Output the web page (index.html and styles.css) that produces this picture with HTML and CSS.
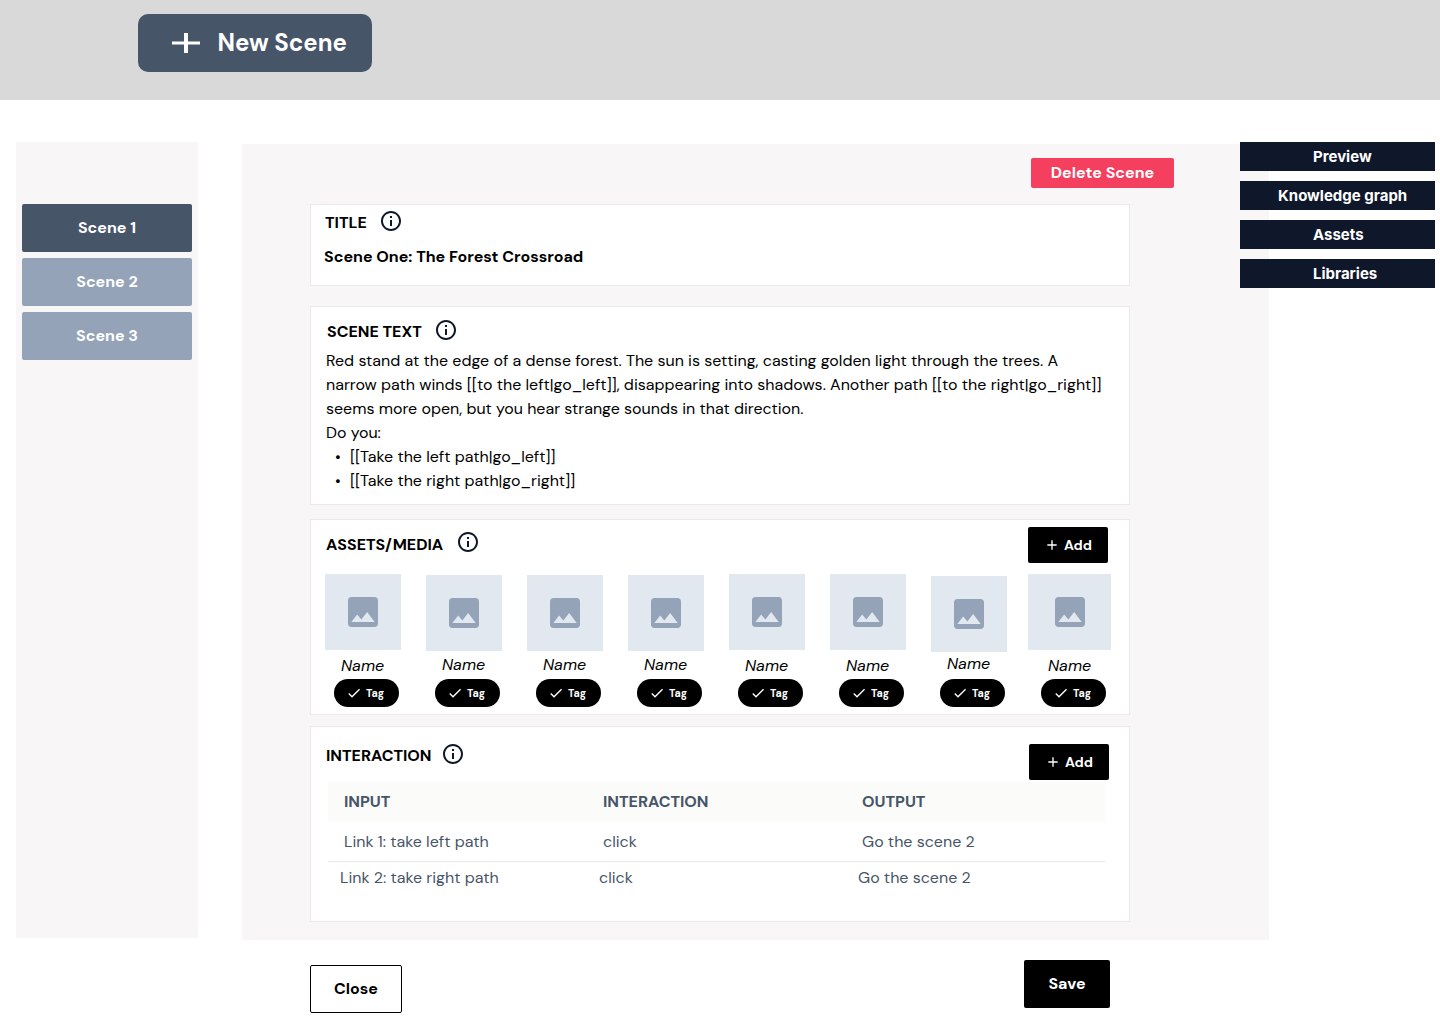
FILE: index.html
```html
<!DOCTYPE html>
<html lang="en">
<head>
<meta charset="utf-8">
<title>Scene editor</title>
<link rel="stylesheet" href="styles.css">
</head>
<body>
<svg class="defs" aria-hidden="true">
  <symbol id="info" viewBox="2 2 20 20"><path d="M11 7h2v2h-2zm0 4h2v6h-2zm1-9C6.48 2 2 6.48 2 12s4.48 10 10 10 10-4.48 10-10S17.52 2 12 2zm0 18c-4.41 0-8-3.59-8-8s3.59-8 8-8 8 3.590 8 8-3.59 8-8 8z"/></symbol>
  <symbol id="image" viewBox="3 3 18 18"><path d="M21 19V5c0-1.100-.9-2-2-2H5c-1.100 0-2 .9-2 2v14c0 1.100.9 2 2 2h14c1.100 0 2-.9 2-2zM8.500 13.500l2.500 3.010L14.500 12l4.500 6H5l3.500-4.500z"/></symbol>
  <symbol id="plus" viewBox="0 0 24 24"><path d="M19 13h-6v6h-2v-6H5v-2h6V5h2v6h6v2z"/></symbol>
  <symbol id="check" viewBox="0 0 24 24"><path d="M9 16.170L4.830 12l-1.420 1.410L9 19 21 7l-1.410-1.410z"/></symbol>
</svg>

<header class="topbar">
  <button class="new-scene">
    <svg class="new-plus" viewBox="5 5 14 14" preserveAspectRatio="none"><path d="M19 13h-6v6h-2v-6H5v-2h6V5h2v6h6v2z"/></svg>
    <span>New Scene</span>
  </button>
</header>

<div class="workspace">
  <aside class="scenes">
    <button class="scene active">Scene 1</button>
    <button class="scene">Scene 2</button>
    <button class="scene">Scene 3</button>
  </aside>

  <main class="editor">
    <button class="delete">Delete Scene</button>

    <section class="card card-title">
      <div class="heading"><h2>TITLE</h2><svg class="info"><use href="#info"/></svg></div>
      <p class="scene-name">Scene One: The Forest Crossroad</p>
    </section>

    <section class="card card-text">
      <div class="heading"><h2>SCENE TEXT</h2><svg class="info"><use href="#info"/></svg></div>
      <div class="prose">
        <p>Red stand at the edge of a dense forest. The sun is setting, casting golden light through the trees. A<br>
        narrow path winds [[to the left|go_left]], disappearing into shadows. Another path [[to the right|go_right]]<br>
        seems more open, but you hear strange sounds in that direction.</p>
        <p>Do you:</p>
        <ul>
          <li>[[Take the left path|go_left]]</li>
          <li>[[Take the right path|go_right]]</li>
        </ul>
      </div>
    </section>

    <section class="card card-assets">
      <div class="bar">
        <div class="heading"><h2>ASSETS/MEDIA</h2><svg class="info"><use href="#info"/></svg></div>
        <button class="add"><svg><use href="#plus"/></svg>Add</button>
      </div>
      <div class="assets">
        <div class="asset"><div class="thumb"><svg><use href="#image"/></svg></div><em>Name</em><span class="tag"><svg><use href="#check"/></svg>Tag</span></div>
        <div class="asset low"><div class="thumb"><svg><use href="#image"/></svg></div><em>Name</em><span class="tag"><svg><use href="#check"/></svg>Tag</span></div>
        <div class="asset low"><div class="thumb"><svg><use href="#image"/></svg></div><em>Name</em><span class="tag"><svg><use href="#check"/></svg>Tag</span></div>
        <div class="asset low"><div class="thumb"><svg><use href="#image"/></svg></div><em>Name</em><span class="tag"><svg><use href="#check"/></svg>Tag</span></div>
        <div class="asset"><div class="thumb"><svg><use href="#image"/></svg></div><em>Name</em><span class="tag"><svg><use href="#check"/></svg>Tag</span></div>
        <div class="asset"><div class="thumb"><svg><use href="#image"/></svg></div><em>Name</em><span class="tag"><svg><use href="#check"/></svg>Tag</span></div>
        <div class="asset lower"><div class="thumb"><svg><use href="#image"/></svg></div><em>Name</em><span class="tag"><svg><use href="#check"/></svg>Tag</span></div>
        <div class="asset wide"><div class="thumb"><svg><use href="#image"/></svg></div><em>Name</em><span class="tag"><svg><use href="#check"/></svg>Tag</span></div>
      </div>
    </section>

    <section class="card card-interaction">
      <div class="bar">
        <div class="heading"><h2>INTERACTION</h2><svg class="info"><use href="#info"/></svg></div>
        <button class="add"><svg><use href="#plus"/></svg>Add</button>
      </div>
      <div class="table">
        <div class="row head"><span>INPUT</span><span>INTERACTION</span><span>OUTPUT</span></div>
        <div class="row first"><span>Link 1: take left path</span><span>click</span><span>Go the scene 2</span></div>
        <div class="row second"><span>Link 2: take right path</span><span>click</span><span>Go the scene 2</span></div>
      </div>
    </section>
  </main>

  <nav class="tools">
    <a>Preview</a>
    <a class="long">Knowledge graph</a>
    <a>Assets</a>
    <a>Libraries</a>
  </nav>
</div>

<footer class="actions">
  <button class="close">Close</button>
  <button class="save">Save</button>
</footer>
</body>
</html>
```
FILE: styles.css
```css
* { box-sizing: border-box; margin: 0; padding: 0; }
body {
  width: 1440px;
  height: 1024px;
  overflow: hidden;
  background: #fff;
  color: #000;
  font: 400 16px/24px "DM Sans", Inter, sans-serif;
}
button { border: 0; border-radius: 2px; font: inherit; font-weight: 700; color: #fff; }
svg { display: block; flex: none; fill: currentColor; }
.defs { position: absolute; width: 0; height: 0; }

.topbar { height: 100px; padding: 14px 138px; background: #d9d9d9; }
.new-scene {
  display: flex; align-items: center; gap: 18px;
  width: 234px; height: 58px; padding-left: 33.5px;
  border-radius: 10px; background: #475569;
  font-size: 24px;
}
.new-plus { width: 28px; height: 20px; }

.workspace { position: relative; display: flex; align-items: flex-start; gap: 44px; padding: 42px 0 0 16px; }
.scenes {
  display: flex; flex-direction: column; gap: 6px;
  width: 182px; height: 796px; padding: 62px 6px 0;
  background: #f8f6f7;
}
.scene { height: 48px; background: #94a3b8; }
.scene.active { background: #475569; }

.editor {
  display: flex; flex-direction: column;
  width: 1027px; height: 796px; margin-top: 2px; padding: 14px 0 0 68px;
  background: #f8f6f7;
}
.delete { width: 143px; height: 30px; margin-left: 721px; background: #f43f5e; }

.card { width: 820px; border: 1px solid #ebebeb; background: #fff; }
.heading { display: flex; align-items: flex-start; }
.heading h2 { font-size: 16px; font-weight: 700; line-height: 24px; }
.info { width: 20px; height: 20px; color: #0f172a; }

.card-title { height: 82px; margin-top: 16px; padding: 6px 13px; }
.card-title .heading { height: 34px; padding-left: 1px; }
.card-title h2 { width: 56px; }
.scene-name { height: 24px; font-weight: 700; }

.card-text { height: 199px; margin-top: 20px; padding: 13px 15px 11px; }
.card-text .heading { height: 29px; padding-left: 1px; }
.card-text h2 { width: 109px; }
.prose { white-space: nowrap; }
.prose ul { list-style: none; }
.prose li { display: flex; }
.prose li::before { content: "•"; width: 15px; padding-left: 9px; }

.card-assets { height: 196px; margin-top: 14px; padding: 7px 14px; }
.bar { display: flex; justify-content: space-between; }
.card-assets .bar { height: 47px; padding: 0 7px 0 1px; }
.card-assets .heading { padding-top: 5px; }
.card-assets h2 { width: 132px; line-height: 26px; }
.add {
  display: flex; align-items: center; gap: 4px;
  width: 80px; height: 36px; padding-left: 16px;
  background: #000; font-size: 14px;
}
.add svg { width: 16px; height: 16px; }

.assets { display: flex; gap: 25px; }
.asset { display: flex; flex-direction: column; width: 76px; height: 133px; }
.thumb { display: flex; align-items: center; justify-content: center; height: 76px; background: #e2e8f0; color: #94a3b8; }
.thumb svg { width: 30px; height: 30px; }
.asset em { height: 24px; margin-top: 4px; padding-left: 16px; }
.tag {
  display: flex; align-items: center; gap: 4px;
  width: 65px; height: 28px; margin: 1px 0 0 9px; padding-left: 12px;
  border-radius: 14px; background: #000; color: #fff;
  font-size: 10.7px; font-weight: 700;
}
.tag svg { width: 16px; height: 16px; }
.low .thumb { margin-top: .7px; }
.low em { margin-top: 2.6px; }
.low .tag { margin-top: 1.7px; }
.lower .thumb { margin-top: 1.7px; }
.lower em { margin-top: .8px; }
.lower .tag { margin-top: 2.5px; }
.wide { width: 83px; margin-left: -4px; }
.wide .tag { margin-left: 13px; }
.wide em { padding-left: 20px; }

.card-interaction { height: 196px; margin-top: 11px; padding: 17px; }
.card-interaction .bar { height: 38px; padding-right: 3px; }
.card-interaction .heading { margin-left: -2px; }
.card-interaction h2 { width: 117px; line-height: 23px; }
.table { width: 777px; color: #475569; }
.row { display: grid; grid-template-columns: repeat(3, 259px); align-items: center; height: 40px; padding-left: 16px; }
.head { background: #fbfbf9; font-weight: 700; }
.first { border-bottom: 1px solid #e2e8f0; }
.second { height: 32px; padding-left: 12px; }

.tools { position: absolute; top: 42px; left: 1240px; display: flex; flex-direction: column; gap: 10px; width: 195px; }
.tools a { height: 29px; padding-left: 73px; background: #0f172a; color: #fff; font: 700 15px/29px Inter, sans-serif; }
.tools .long { padding-left: 38px; }

.actions { display: flex; justify-content: space-between; width: 1110px; padding: 20px 0 0 310px; }
.actions button { height: 48px; }
.actions .close { width: 92px; margin-top: 5px; border: 1px solid #000; background: #fff; color: #000; }
.save { width: 86px; background: #000; }
```
